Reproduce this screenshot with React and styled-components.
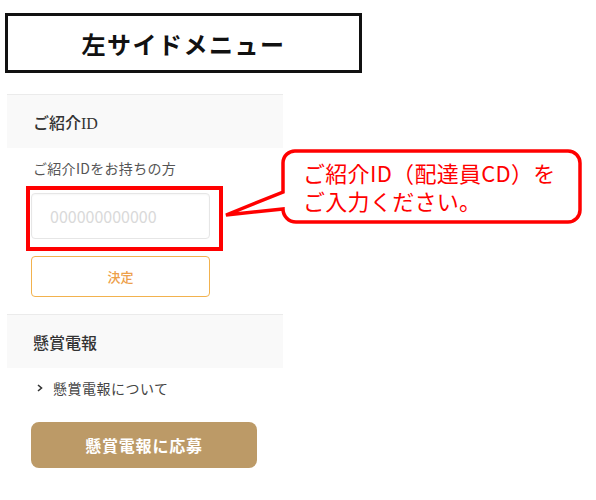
import React from "react";
import styled, { createGlobalStyle } from "styled-components";

const Global = createGlobalStyle`
  html, body { margin: 0; padding: 0; background: #fff; }
  body { font-family: "Noto Sans CJK JP", "Noto Sans", sans-serif; }
  * { box-sizing: border-box; }
`;

const Page = styled.div`
  position: relative;
  width: 596px;
  height: 500px;
  padding: 13px 0 0 5px;
`;

const TitleBox = styled.div`
  width: 357px;
  height: 60px;
  border: 3px solid #111;
  display: flex;
  align-items: center;
  justify-content: center;
  font-size: 24px;
  font-weight: 700;
  letter-spacing: 1.5px;
  color: #111;
`;

const Sidebar = styled.aside`
  width: 276px;
  margin: 21px 0 0 2px;
`;

const SectionHead = styled.div`
  height: 54px;
  border-top: 1px solid #ebebeb;
  background: #f9f9f9;
  display: flex;
  align-items: center;
  padding-left: 26px;
  font-family: "Liberation Serif", "Noto Sans CJK JP", serif;
  font-size: 16px;
  font-weight: 500;
  color: #333;
`;

const Body = styled.div`
  padding: ${(p) => p.$pad || "0"};
  display: flex;
  flex-direction: column;
  align-items: flex-start;
`;

const Label = styled.div`
  font-size: 14px;
  color: #555;
  letter-spacing: 0.3px;
  line-height: 20px;
  margin-left: 26px;
`;

const InputWrap = styled.div`
  position: relative;
  margin: 15px 0 0 24px;
  &::after {
    content: "";
    position: absolute;
    left: -5px;
    top: -7px;
    width: 189px;
    height: 57px;
    border: 4px solid #f00;
    pointer-events: none;
  }
`;

const Input = styled.input`
  display: block;
  width: 179px;
  height: 46px;
  border: 1px solid #e6e6e6;
  border-radius: 4px;
  background: #fff;
  padding: 0 0 0 18px;
  font-family: "Noto Sans CJK JP", "Noto Sans", sans-serif;
  font-size: 16px;
  color: #333;
  box-shadow: inset 0 1px 2px rgba(0,0,0,0.04);
  &::placeholder { color: #d9d9d9; }
  outline: none;
`;

const OutlineButton = styled.button`
  margin: 17px 0 0 24px;
  width: 179px;
  height: 41px;
  border: 1px solid #f2b24e;
  border-radius: 4px;
  background: #fff;
  color: #eda04a;
  font-family: "Noto Sans CJK JP", sans-serif;
  font-size: 13px;
  font-weight: 500;
`;

const LinkItem = styled.div`
  display: flex;
  align-items: center;
  gap: 10px;
  margin: 10px 0 0 30px;
  font-size: 14px;
  letter-spacing: 0.5px;
  color: #444;
  line-height: 20px;
`;

const Chevron = styled.svg`
  width: 6px;
  height: 8px;
`;

const FillButton = styled.button`
  margin: 24px 0 0 24px;
  width: 226px;
  height: 46px;
  border: none;
  border-radius: 8px;
  background: #bc9a67;
  color: #fff;
  font-family: "Noto Sans CJK JP", serif;
  font-size: 16px;
  font-weight: 700;
  letter-spacing: 0.8px;
`;

const Callout = styled.div`
  position: absolute;
  left: 224px;
  top: 148px;
  width: 360px;
  height: 78px;
`;

const CalloutShape = styled.svg`
  position: absolute;
  inset: 0;
  overflow: visible;
`;

const CalloutText = styled.div`
  position: relative;
  padding: 10px 0 0 79px;
  font-family: "Noto Sans CJK JP", sans-serif;
  font-size: 22px;
  line-height: 28px;
  color: #f00;
  letter-spacing: 0.3px;
  white-space: nowrap;
`;

export default function App() {
  return (
    <>
      <Global />
      <Page>
        <TitleBox>左サイドメニュー</TitleBox>
        <Sidebar>
          <SectionHead>ご紹介ID</SectionHead>
          <Body $pad="10px 0 17px">
            <Label>ご紹介IDをお持ちの方</Label>
            <InputWrap>
              <Input placeholder="000000000000" />
            </InputWrap>
            <OutlineButton>決定</OutlineButton>
          </Body>
          <SectionHead>懸賞電報</SectionHead>
          <Body>
            <LinkItem>
              <Chevron viewBox="0 0 6 8">
                <path d="M1 1 L4.5 4 L1 7" fill="none" stroke="#333" strokeWidth="1.6" />
              </Chevron>
              懸賞電報について
            </LinkItem>
            <FillButton>懸賞電報に応募</FillButton>
          </Body>
        </Sidebar>
        <Callout>
          <CalloutShape width="360" height="78" viewBox="0 0 360 78">
            <path
              d="M72 3 H344 A12 12 0 0 1 356 15 V62 A12 12 0 0 1 344 74 H72 A13 13 0 0 1 59 61 L2 67 L59 44 V15 A12 12 0 0 1 72 3 Z"
              fill="#fff"
              stroke="#f00"
              strokeWidth="3.5"
              strokeLinejoin="miter"
            />
          </CalloutShape>
          <CalloutText>
            ご紹介ID（配達員CD）を
            <br />
            ご入力ください。
          </CalloutText>
        </Callout>
      </Page>
    </>
  );
}
